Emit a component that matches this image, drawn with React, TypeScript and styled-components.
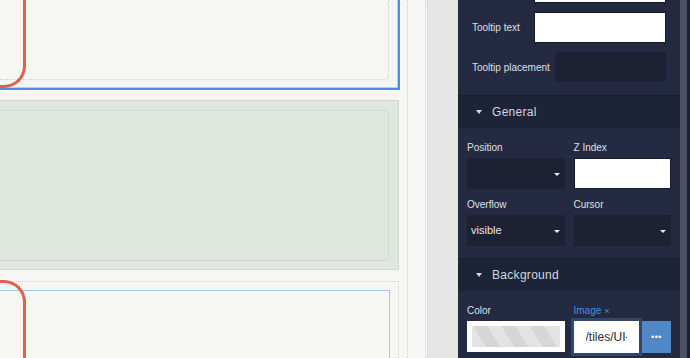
import styled, { createGlobalStyle } from "styled-components";

const GlobalStyle = createGlobalStyle`
  html, body {
    margin: 0;
    padding: 0;
    overflow: hidden;
  }

  body {
    font-family: "Liberation Sans", Arial, sans-serif;
    background: #f6f6f4;
  }

  * {
    box-sizing: border-box;
  }
`;

const Shell = styled.div`
  display: flex;
  width: 690px;
  height: 358px;
  overflow: hidden;
`;

/* ---------- canvas ---------- */

const Canvas = styled.div`
  flex: none;
  width: 427px;
  height: 100%;
  background: #f6f6f4;
`;

const Frame = styled.div<{ $width: number }>`
  width: ${({ $width }) => $width}px;
  height: 100%;
  border-right: 1px dotted #d2d2d2;
`;

const Stack = styled.div`
  display: flex;
  flex-direction: column;
  width: 400px;
  height: 100%;
`;

const SelectedBlock = styled.div`
  position: relative;
  display: flex;
  flex: none;
  height: 90px;
  padding: 0 9px 8px 0;
  border-right: 2px solid #4a8fe0;
  border-bottom: 2px solid #4a8fe0;
  box-shadow: inset -1px -1px 0 #b4d0f3;
`;

const GreenBlock = styled.div`
  display: flex;
  flex: none;
  width: 399px;
  height: 170px;
  margin-top: 10px;
  padding: 9px 9px 8px 0;
  background: #dfe7df;
  border-top: 1px dotted #c3cdc3;
  border-right: 1px dotted #c3cdc3;
  border-bottom: 1px dotted #c3cdc3;
`;

const PlainBlock = styled.div`
  position: relative;
  display: flex;
  flex: 1;
  width: 399px;
  margin-top: 11px;
  padding: 8px 8px 0 0;
  border-top: 1px dotted #d0d0d0;
  border-right: 1px dotted #d0d0d0;
`;

const DropZone = styled.div<{ $line: string }>`
  flex: 1;
  border-top: 1px dotted ${({ $line }) => $line};
  border-right: 1px dotted ${({ $line }) => $line};
  border-bottom: 1px dotted ${({ $line }) => $line};
  border-radius: 0 4px 4px 0;
`;

const EndZone = styled.div`
  flex: 1;
  border-right: 1px dotted #cfcfcf;
  border-bottom: 1px dotted #cfcfcf;
  border-bottom-right-radius: 4px;
`;

const HoverZone = styled.div`
  flex: 1;
  border-top: 1px solid #a8c7ee;
  border-right: 1px solid #a8c7ee;
`;

const RoundOutline = styled.div<{ $edge: "top" | "bottom" }>`
  position: absolute;
  left: 0;
  width: 26px;
  height: 128px;
  border-right: 3px solid #e0614a;
  ${({ $edge }) =>
    $edge === "bottom"
      ? `
    top: -40px;
    border-bottom: 3px solid #e0614a;
    border-bottom-right-radius: 22px;
  `
      : `
    top: -2px;
    border-top: 3px solid #e0614a;
    border-top-right-radius: 22px;
  `}
`;

const Gutter = styled.div`
  flex: none;
  width: 31px;
  height: 100%;
  background: #e6e6e6;
  border-left: 1px solid #d8d8d8;
`;

/* ---------- inspector ---------- */

const Panel = styled.div`
  display: flex;
  flex: 1;
  min-width: 0;
  height: 100%;
  background: #232a42;
`;

const PanelBody = styled.div`
  display: flex;
  flex-direction: column;
  flex: 1;
  min-width: 0;
`;

const ScrollTrack = styled.div`
  flex: none;
  width: 10px;
  height: 100%;
  background: #1b2030;
`;

const ScrollThumb = styled.div`
  width: 7px;
  height: 100%;
  background: #4b5065;
`;

const PropList = styled.div`
  display: flex;
  flex-direction: column;
  gap: 9px;
  margin-top: -28px;
  padding: 0 14px 13px;
`;

const PropRow = styled.div`
  display: flex;
  align-items: center;

  & > :last-child {
    flex: 1;
    min-width: 0;
  }
`;

const PropLabel = styled.span`
  flex: none;
  min-width: 57px;
  margin-right: 5px;
  font-size: 10px;
  color: #dde0e7;
  white-space: nowrap;
`;

const TextField = styled.input`
  display: block;
  width: 100%;
  min-width: 0;
  height: 31px;
  padding: 0 6px;
  background: #fff;
  border: 1px solid #161b2a;
  font-family: inherit;
  font-size: 12px;
  color: #333;
  outline: none;
`;

const SelectBox = styled.div<{ $height?: number }>`
  position: relative;
  display: flex;
  align-items: center;
  height: ${({ $height }) => $height ?? 31}px;
  padding: 0 0 2px 4px;
  background: #1c2133;
  font-size: 11px;
  color: #e6e8ee;
`;

const Caret = styled.span`
  position: absolute;
  right: 5px;
  top: 50%;
  margin-top: -1px;
  width: 0;
  height: 0;
  border-left: 3px solid transparent;
  border-right: 3px solid transparent;
  border-top: 3px solid #e6e8ee;
`;

const SectionHeader = styled.div`
  display: flex;
  align-items: center;
  gap: 10px;
  flex: none;
  height: 33px;
  padding-left: 18px;
  background: #1e2437;
  border-top: 1px solid #191e2d;
  font-size: 12px;
  letter-spacing: 0.3px;
  color: #d3d7e0;
`;

const HeaderCaret = styled.span`
  width: 0;
  height: 0;
  border-left: 3.5px solid transparent;
  border-right: 3.5px solid transparent;
  border-top: 4px solid #d3d7e0;
`;

const SectionBody = styled.div`
  display: grid;
  grid-template-columns: repeat(2, minmax(0, 1fr));
  gap: 10px 9px;
  padding: 14px 9px 12px;
`;

const Field = styled.div`
  display: flex;
  flex-direction: column;
  min-width: 0;
`;

const FieldLabel = styled.span<{ $accent?: boolean }>`
  height: 12px;
  margin-bottom: 4px;
  font-size: 10px;
  line-height: 12px;
  color: ${({ $accent }) => ($accent ? "#4a90e2" : "#dde0e7")};
`;

const Clear = styled.span`
  margin-left: 3px;
  font-size: 9px;
`;

const Swatch = styled.div`
  height: 31px;
  padding: 5px;
  background: #fff;
`;

const SwatchFill = styled.div`
  height: 100%;
  border-radius: 2px;
  background: repeating-linear-gradient(
    58deg,
    #e3e3e3 0px,
    #e3e3e3 12px,
    #d6d6d6 12px,
    #d6d6d6 24px
  );
`;

const ImageRow = styled.div`
  display: flex;
  height: 32px;
`;

const ImageInput = styled.input`
  flex: 1;
  width: 0;
  min-width: 0;
  margin-right: 3px;
  padding: 0 12px;
  background: #fff;
  border: none;
  box-shadow: 0 0 0 3px #33466b;
  font-family: inherit;
  font-size: 12px;
  color: #2b2b2b;
  outline: none;
`;

const BrowseButton = styled.button`
  flex: none;
  width: 29px;
  padding: 0;
  border: none;
  background: #4f87c7;
  color: #fff;
  font-size: 9px;
  letter-spacing: 0.5px;
  font-family: inherit;
`;

export default function App() {
  return (
    <>
      <GlobalStyle />
      <Shell>
        <Canvas>
          <Frame $width={426}>
            <Frame $width={408}>
              <Stack>
                <SelectedBlock>
                  <EndZone />
                  <RoundOutline $edge="bottom" />
                </SelectedBlock>
                <GreenBlock>
                  <DropZone $line="#c3cdc3" />
                </GreenBlock>
                <PlainBlock>
                  <HoverZone />
                  <RoundOutline $edge="top" />
                </PlainBlock>
              </Stack>
            </Frame>
          </Frame>
        </Canvas>
        <Gutter />
        <Panel>
          <PanelBody>
            <PropList>
              <PropRow>
                <PropLabel />
                <TextField readOnly value="" />
              </PropRow>
              <PropRow>
                <PropLabel>Tooltip text</PropLabel>
                <TextField readOnly value="" />
              </PropRow>
              <PropRow>
                <PropLabel>Tooltip placement</PropLabel>
                <SelectBox $height={30} />
              </PropRow>
            </PropList>

            <SectionHeader>
              <HeaderCaret />
              General
            </SectionHeader>
            <SectionBody>
              <Field>
                <FieldLabel>Position</FieldLabel>
                <SelectBox>
                  <Caret />
                </SelectBox>
              </Field>
              <Field>
                <FieldLabel>Z Index</FieldLabel>
                <TextField readOnly value="" />
              </Field>
              <Field>
                <FieldLabel>Overflow</FieldLabel>
                <SelectBox>
                  visible
                  <Caret />
                </SelectBox>
              </Field>
              <Field>
                <FieldLabel>Cursor</FieldLabel>
                <SelectBox>
                  <Caret />
                </SelectBox>
              </Field>
            </SectionBody>

            <SectionHeader>
              <HeaderCaret />
              Background
            </SectionHeader>
            <SectionBody>
              <Field>
                <FieldLabel>Color</FieldLabel>
                <Swatch>
                  <SwatchFill />
                </Swatch>
              </Field>
              <Field>
                <FieldLabel $accent>
                  Image<Clear>×</Clear>
                </FieldLabel>
                <ImageRow>
                  <ImageInput readOnly value="/tiles/UI-background.png" />
                  <BrowseButton>•••</BrowseButton>
                </ImageRow>
              </Field>
            </SectionBody>
          </PanelBody>
          <ScrollTrack>
            <ScrollThumb />
          </ScrollTrack>
        </Panel>
      </Shell>
    </>
  );
}
